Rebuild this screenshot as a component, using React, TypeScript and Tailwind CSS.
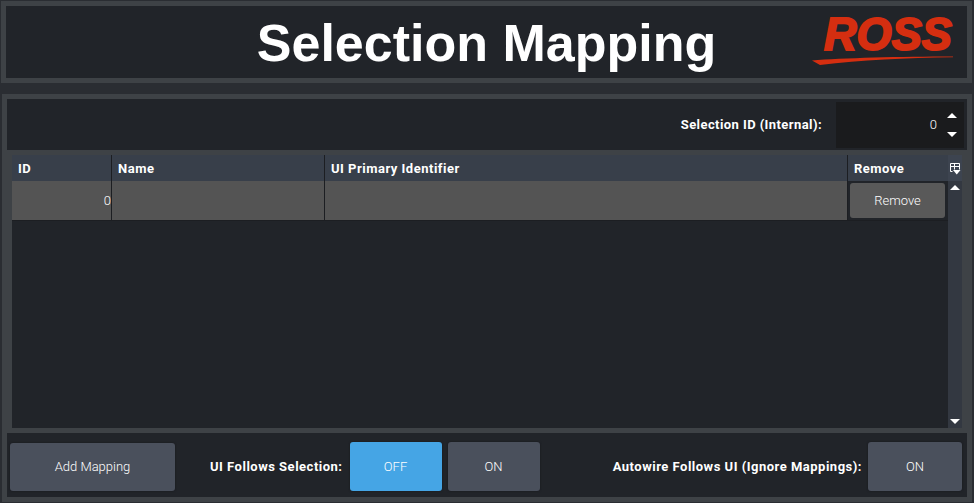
import React from "react";

const labelClass = "font-['Roboto',sans-serif] font-bold text-[13px] tracking-[0.5px] text-white whitespace-nowrap";
const headClass = `${labelClass} pl-[6px] pt-px flex items-center`;
const btnClass = "flex items-center justify-center rounded-[3px] text-[13px] font-['Roboto',sans-serif] font-light text-white shadow-[0_0_2px_#15171a]";

const Triangle = ({ down = false }: { down?: boolean }) => (
  <svg width="12" height="7" viewBox="0 0 12 7" className="block">
    <path d={down ? "M1 1h10L6 6z" : "M6 1l5 5H1z"} fill="#fff" />
  </svg>
);

const RossLogo = () => (
  <svg width="144" height="72" viewBox="0 0 144 72" className="block">
    <text x="13" y="44" fontFamily="'Liberation Sans', sans-serif" fontWeight="700" fontStyle="italic" fontSize="46" textLength="128" lengthAdjust="spacingAndGlyphs" fill="#d52e10" stroke="#d52e10" strokeWidth="2">ROSS</text>
    <path d="M1 54.500C30 52 90 50.500 142 50.500v.8C95 52 50 54 9 59z" fill="#d52e10" />
  </svg>
);

const App = () => {
  return (
    <div className="w-[974px] h-[503px] flex flex-col bg-[#2a2d32] pt-px pb-px overflow-hidden font-['Roboto',sans-serif]">
      {/* title panel */}
      <div className="ml-px mr-[2px] h-[82px] shrink-0 border-[5px] border-[#3e4246] bg-[#212429] grid grid-cols-[1fr_auto_1fr] items-center">
        <div />
        <h1 className="font-['Liberation_Sans',sans-serif] font-bold text-[52px] leading-none text-white mt-[2px]">Selection Mapping</h1>
        <div className="flex justify-end pr-[12px]">
          <RossLogo />
        </div>
      </div>

      {/* main panel */}
      <div className="mt-[11px] mx-[2px] flex-1 border-[5px] border-[#3e4246] bg-[#212429] flex flex-col min-h-0">
        <div className="h-[51px] shrink-0 flex items-center justify-end pr-[3px]">
          <span className={`${labelClass} !tracking-[0.42px] mr-[14px]`}>Selection ID (Internal):</span>
          <div className="w-[128px] h-[46px] bg-[#1a1b1d] flex items-center justify-end text-[13px] text-white font-light">
            <span className="mr-[9px]">0</span>
            <div className="flex flex-col gap-[12px] mr-[6px]">
              <Triangle />
              <Triangle down />
            </div>
          </div>
        </div>

        {/* table */}
        <div className="h-[283px] shrink-0 border-[5px] border-[#3e4246] flex">
          <div className="w-[936px] flex flex-col">
            <div className="h-[26px] shrink-0 bg-[#383f4a] flex">
              <div className={`${headClass} w-[100px] border-r border-[#1c1e22]`}>ID</div>
              <div className={`${headClass} w-[213px] border-r border-[#1c1e22]`}>Name</div>
              <div className={`${headClass} w-[523px] border-r border-[#1c1e22]`}>UI Primary Identifier</div>
              <div className={`${headClass} w-[100px]`}>Remove</div>
            </div>
            <div className="h-[40px] shrink-0 flex border-b border-[#1c1e22]">
              <div className="w-[100px] bg-[#545454] border-r border-[#1c1e22] flex items-center justify-end text-[13px] font-light text-white">0</div>
              <div className="w-[213px] bg-[#545454] border-r border-[#1c1e22]" />
              <div className="w-[523px] bg-[#545454] border-r border-[#1c1e22]" />
              <div className="w-[100px] flex items-center justify-start pl-[2px]">
                <button className="w-[95px] h-[35px] rounded-[3px] bg-[#595959] text-[13px] font-light text-white">Remove</button>
              </div>
            </div>
          </div>
          <div className="w-[14px] flex flex-col bg-[#333841]">
            <div className="h-[26px] shrink-0 bg-[#3d4450] flex items-center justify-center">
              <svg width="12" height="13" viewBox="0 0 12 13" fill="none" stroke="#fff" strokeWidth="1" className="block">
                <path d="M3.500 9.500H1.500v-8h9v6M1.500 4.500h9M5.500 1.500v6" />
                <path d="M4 8h7.500L7.750 12.500z" fill="#fff" stroke="none" />
              </svg>
            </div>
            <div className="flex-1 flex flex-col items-center justify-between pt-[3px] pb-[3px]">
              <Triangle />
              <Triangle down />
            </div>
          </div>
        </div>

        {/* bottom bar */}
        <div className="flex-1 flex items-center pl-[3px] pr-[5px] pt-[3px]">
          <button className={`${btnClass} w-[165px] h-[48px] mt-[1px] bg-[#4a505c]`}>Add Mapping</button>
          <span className={`${labelClass} ml-[35px] mr-[7px]`}>UI Follows Selection:</span>
          <button className={`${btnClass} w-[92px] h-[49px] bg-[#45a5e5]`}>OFF</button>
          <button className={`${btnClass} w-[92px] h-[49px] ml-[6px] bg-[#4a505c]`}>ON</button>
          <span className={`${labelClass} ml-auto mr-[6px]`}>Autowire Follows UI (Ignore Mappings):</span>
          <button className={`${btnClass} w-[94px] h-[49px] bg-[#4a505c]`}>ON</button>
        </div>
      </div>
    </div>
  );
};

export default App;
